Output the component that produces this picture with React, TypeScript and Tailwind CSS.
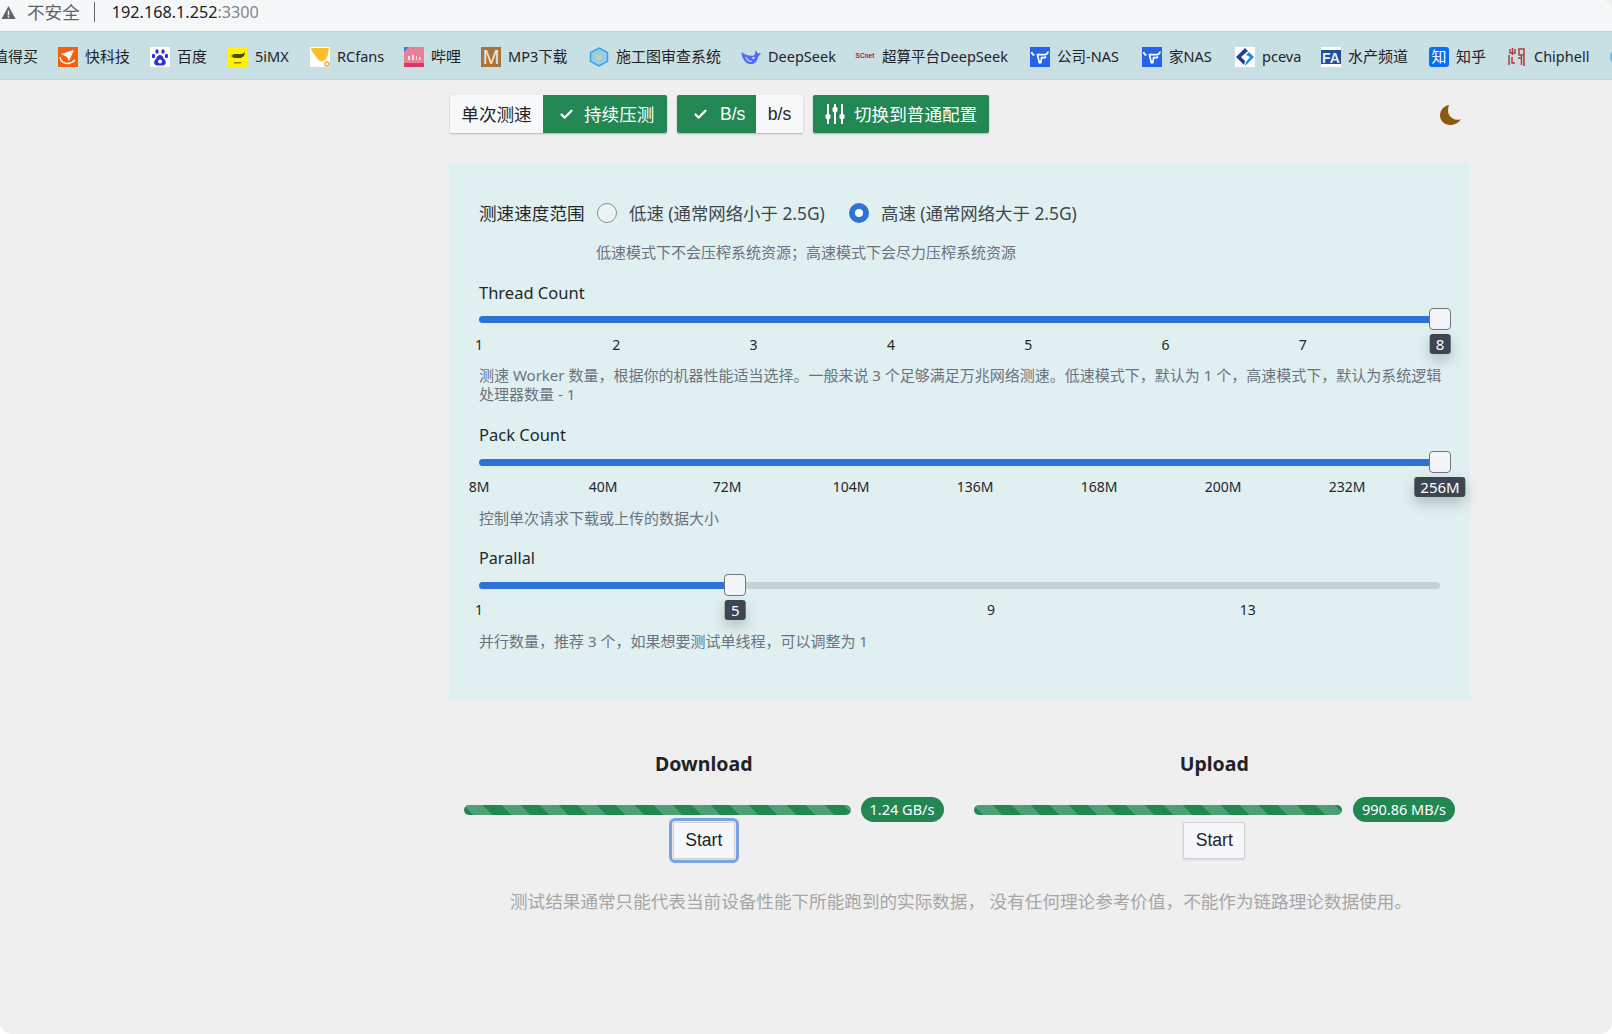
import { Check } from 'lucide-react';
import type { ReactNode } from 'react';

const sans = "font-['Noto_Sans','Noto_Sans_CJK_SC',sans-serif]";
const arial = "font-['Liberation_Sans','Noto_Sans_CJK_SC',sans-serif]";

const Bull = ({ fill = '#2563eb' }: { fill?: string }) => (
  <svg viewBox="0 0 20 20" className="size-5">
    <rect width="20" height="20" fill={fill} />
    <path d="M1.500 5c.5 2 1.500 3 3 3M18 4.500c0 2-1.500 3-3.500 3.200H7.500l1.800 8h1.500l.8-5h3.500l.5-1.500" fill="none" stroke="#fff" strokeWidth="1.700" />
  </svg>
);

const bookmarks: { name: string; w: string; icon: ReactNode }[] = [
  {
    name: '快科技',
    w: 'w-[92px]',
    icon: (
      <svg viewBox="0 0 20 20" className="size-5">
        <rect width="20" height="20" fill="#f4620f" />
        <path d="M3 7l13-4-5 11-2-4z" fill="#fff" />
        <path d="M2 10c1 7 9 9 15 3" fill="none" stroke="#fff" strokeWidth="1.500" />
      </svg>
    ),
  },
  {
    name: '百度',
    w: 'w-[78px]',
    icon: (
      <svg viewBox="0 0 20 20" className="size-5">
        <rect width="20" height="20" fill="#fff" />
        <g fill="#2932e1">
          <ellipse cx="7" cy="4.500" rx="1.700" ry="2.300" />
          <ellipse cx="13" cy="4.500" rx="1.700" ry="2.300" />
          <ellipse cx="3.500" cy="9" rx="1.700" ry="2.300" />
          <ellipse cx="16.500" cy="9" rx="1.700" ry="2.300" />
          <path d="M10 8c-3 0-3 3-5 5-2 3 0 5.500 2.500 5.500h5c2.500 0 4.500-2.500 2.500-5.500-2-2-2-5-5-5z" />
        </g>
        <circle cx="10" cy="14.500" r="2" fill="#fff" />
      </svg>
    ),
  },
  {
    name: '5iMX',
    w: 'w-[82px]',
    icon: (
      <svg viewBox="0 0 20 20" className="size-5">
        <rect width="20" height="20" fill="#fff200" />
        <path d="M3 9l3-2h8l3-2-1 4-3 2H6z" fill="#4d4a10" />
        <rect x="6" y="15" width="7" height="1.500" fill="#8a861a" />
      </svg>
    ),
  },
  {
    name: 'RCfans',
    w: 'w-[94px]',
    icon: (
      <svg viewBox="0 0 20 20" className="size-5">
        <rect width="20" height="20" fill="#fff" />
        <path d="M1 1h18l-1.500 8c-1 3-3 4-4.500 5-3 1-4-.5-6-3C5 8 2 6 1 1z" fill="#fdbf26" />
        <circle cx="17" cy="17" r="2" fill="none" stroke="#f5a742" strokeWidth="1.500" />
      </svg>
    ),
  },
  {
    name: '哔哩',
    w: 'w-[77px]',
    icon: (
      <svg viewBox="0 0 20 20" className="size-5">
        <rect width="20" height="20" fill="#e9809a" />
        <rect y="16" width="20" height="4" fill="#d83b66" />
        <path d="M0 0h5L0 5z" fill="#3a7bd5" />
        <path d="M4 13V9h2v4zm4 0V8h2v5zm4 0V9h1v4zm3 0v-3h1.500v3z" fill="#fbe4ea" />
      </svg>
    ),
  },
  {
    name: 'MP3下载',
    w: 'w-[108px]',
    icon: (
      <div className={`flex size-5 items-center justify-center bg-[#a9743c] text-[20px] leading-none text-[#f3e7d8] ${arial}`}>M</div>
    ),
  },
  {
    name: '施工图审查系统',
    w: 'w-[152px]',
    icon: (
      <svg viewBox="0 0 20 20" className="size-5">
        <path d="M10 1l8.500 4.700v8.600L10 19l-8.500-4.700V5.700z" fill="#8fd0ee" stroke="#3e9ddb" strokeWidth="1.500" />
        <rect x="7.500" y="8" width="5" height="5" fill="#e8c884" />
      </svg>
    ),
  },
  {
    name: 'DeepSeek',
    w: 'w-[114px]',
    icon: (
      <svg viewBox="0 0 20 20" className="size-5">
        <path d="M.5 5c.5 7 4.500 13 10.500 12 3.500-.5 5.500-3.500 6-7L20 6l-3 .5L14.500 3c.5 2-.5 4-1.500 5.500C9 9.500 4 8 .5 5z" fill="#4d6bfe" />
        <path d="M5 10c1 3 3 4.500 6 4.500" fill="none" stroke="#c8dfe3" strokeWidth="1.200" />
        <circle cx="12.500" cy="11" r="1.200" fill="#c8dfe3" />
      </svg>
    ),
  },
  {
    name: '超算平台DeepSeek',
    w: 'w-[175px]',
    icon: (
      <div className={`flex size-5 items-center justify-center text-[6.500px] leading-none font-bold whitespace-nowrap text-[#b3202c] ${arial}`}>SCnet</div>
    ),
  },
  { name: '公司-NAS', w: 'w-[112px]', icon: <Bull /> },
  { name: '家NAS', w: 'w-[93px]', icon: <Bull /> },
  {
    name: 'pceva',
    w: 'w-[86px]',
    icon: (
      <svg viewBox="0 0 20 20" className="size-5">
        <rect width="20" height="20" fill="#fff" />
        <path d="M10 1l3 3-7 6 4 4-1 4-8-8z" fill="#1d3f9a" />
        <path d="M14 5l5 5-9 9 1-4 4-5-4-2z" fill="#1d8fd8" />
      </svg>
    ),
  },
  {
    name: '水产频道',
    w: 'w-[108px]',
    icon: (
      <div className={`flex size-5 items-end justify-center bg-[linear-gradient(#fff_15%,#1f4e94_15%,#1f4e94_85%,#fff_85%)] pb-[2px] text-[14px] leading-none font-bold text-[#e8eef6] ${arial}`}>FA</div>
    ),
  },
  {
    name: '知乎',
    w: 'w-[78px]',
    icon: (
      <div className={`flex size-5 items-center justify-center rounded-[3px] bg-[#0b6cf5] text-[15px] leading-none text-white ${sans}`}>知</div>
    ),
  },
  {
    name: 'Chiphell',
    w: 'w-[103px]',
    icon: (
      <svg viewBox="0 0 20 20" className="size-5" fill="none" stroke="#b5393f" strokeWidth="1.500">
        <path d="M3 2v4h5V2M5.500 1v7M2 8v10M5 10v6h3M12 2h5v6h-5zM14.500 8v10M11 11h3M17 9v10" />
      </svg>
    ),
  },
];

type Marks = { labels: string[]; itemW: string };

function Slider({ percent, badge, marks, tickGap }: { percent: number; badge: string; marks: Marks; tickGap: string }) {
  return (
    <div className="w-[961px]">
      <div className="relative h-[22px] pt-2">
        <div className="h-[7px] overflow-hidden rounded-full bg-[#c5d2d5]">
          <div className="h-full bg-[#2e72d6]" style={{ width: `${percent}%` }} />
        </div>
        <div
          className="absolute top-0 -ml-[11px] size-[22px] rounded-[4px] border border-[#6f767e] bg-[#f3f5f8]"
          style={{ left: `${percent}%` }}
        />
        <div
          className="absolute top-[26px] flex h-5 -translate-x-1/2 items-center rounded-[3px] bg-[#3e4552] px-[6px] text-[15px] leading-none text-white shadow-[0_6px_14px_rgba(0,0,0,0.22)]"
          style={{ left: `${percent}%` }}
        >
          {badge}
        </div>
      </div>
      <div className={`${tickGap} flex h-5 items-center text-[14px] leading-5 text-[#23272b]`}>
        {marks.labels.map((label) => (
          <div key={label} className={`${marks.itemW} shrink-0`}>
            <span className="inline-block -translate-x-1/2">{label}</span>
          </div>
        ))}
      </div>
    </div>
  );
}

function Radio({ on }: { on?: boolean }) {
  if (on) {
    return (
      <span className="flex size-5 items-center justify-center rounded-full bg-[#2e72d6]">
        <span className="size-2 rounded-full bg-white" />
      </span>
    );
  }
  return <span className="size-5 rounded-full border-[1.5px] border-[#868e96] bg-[#eaf4f4]" />;
}

function Meter({ title, value, barW, badgeW, pad, focused }: { title: string; value: string; barW: string; badgeW: string; pad: string; focused?: boolean }) {
  return (
    <div className={`${pad} flex w-1/2 flex-col items-center`}>
      <div className="h-7 text-[19.500px] leading-7 font-bold text-[#1f2328]">{title}</div>
      <div className="mt-[19px] flex h-[25px] w-full items-center justify-between">
        <div className={`${barW} h-[10px] rounded-full bg-[#228753] bg-[linear-gradient(45deg,rgba(255,255,255,.2)_25%,transparent_25%,transparent_50%,rgba(255,255,255,.2)_50%,rgba(255,255,255,.2)_75%,transparent_75%,transparent)] bg-[length:38px_38px]`} />
        <div className={`${badgeW} flex h-[25px] items-center justify-center rounded-full bg-[#228753] text-[14.500px] text-white`}>{value}</div>
      </div>
      <button
        className={`h-[37px] w-[62px] rounded-[2px] border border-[#cfd0d2] bg-[#f6f7fa] text-[17.600px] text-[#1f2328] shadow-[0_1px_2px_rgba(0,0,0,0.1)] ${arial} ${focused ? 'outline-[3px] outline-offset-[1px] outline-[#7aa3e0]' : ''}`}
      >
        Start
      </button>
    </div>
  );
}

export default function App() {
  return (
    <div className={`h-[1034px] w-[1612px] overflow-hidden rounded-b-[12px] bg-[#efefef] ${sans}`}>
      <div className="flex h-[31px] items-start rounded-tr-[10px] bg-[#f5f8f9] text-[17.600px] leading-6 text-[#202124]">
        <svg viewBox="0 0 16 16" className="mt-[5px] ml-[1px] size-[15px]">
          <path d="M8 1l7.500 14H.5z" fill="#5f6368" />
          <rect x="7.200" y="6" width="1.600" height="5" fill="#f5f8f9" />
          <rect x="7.200" y="12" width="1.600" height="1.600" fill="#f5f8f9" />
        </svg>
        <span className="ml-[11px] text-[#5f6368]">不安全</span>
        <span className="mt-[2px] ml-[14px] h-5 w-px bg-[#5f6368]" />
        <span className="ml-[17px] text-[16.200px]">192.168.1.252<span className="text-[#80868b]">:3300</span></span>
      </div>

      <div className="flex h-[49px] items-center overflow-hidden border-y border-[#c9ced0] bg-[#c8dfe3] pt-[2px] text-[#1f2328]">
        <div className="-ml-[7px] w-[65px] shrink-0 text-[15px]">值得买</div>
        {bookmarks.map((b) => (
          <div key={b.name} className={`${b.w} flex shrink-0 items-center gap-[7px] ${/[a-z]/i.test(b.name) ? 'text-[14.500px]' : 'text-[15px]'}`}>
            {b.icon}
            <span className="whitespace-nowrap">{b.name}</span>
          </div>
        ))}
        <div className="size-5 shrink-0 rounded-full bg-[#6fb7e0]" />
      </div>

      <div className="ml-[449px] w-[1021px]">
        <div className="flex h-[83px] items-start pt-[15px] text-[17.600px]">
          <div className="ml-px flex h-[38px] rounded-[2px] shadow-[0_1px_2px_rgba(0,0,0,0.25)]">
            <div className="flex w-[93px] items-center justify-center rounded-l-[2px] bg-[#f7f8fa] text-[#23272b]">单次测速</div>
            <div className="flex w-[124px] items-center gap-[10px] rounded-r-[2px] bg-[#228753] pl-4 text-white">
              <Check size={15} strokeWidth={3.500} />
              持续压测
            </div>
          </div>
          <div className={`ml-[10px] flex h-[38px] rounded-[2px] shadow-[0_1px_2px_rgba(0,0,0,0.25)] ${arial}`}>
            <div className="flex w-[79px] items-center gap-[12px] rounded-l-[2px] bg-[#228753] pl-4 text-white">
              <Check size={15} strokeWidth={3.500} />
              B/s
            </div>
            <div className="flex w-[47px] items-center justify-center rounded-r-[2px] bg-[#f7f8fa] text-[#23272b]">b/s</div>
          </div>
          <div className="ml-[10px] flex h-[38px] w-[176px] items-center gap-[9px] rounded-[2px] bg-[#228753] pl-3 text-white shadow-[0_1px_2px_rgba(0,0,0,0.25)]">
            <svg viewBox="0 0 20 20" className="size-5" fill="#fff">
              <rect x="2" y="0" width="2" height="20" />
              <rect x="9" y="0" width="2" height="20" />
              <rect x="16" y="0" width="2" height="20" />
              <rect x="0.500" y="10" width="5" height="5" rx="1.500" />
              <rect x="7.500" y="3" width="5" height="5" rx="1.500" />
              <rect x="14.500" y="10" width="5" height="5" rx="1.500" />
            </svg>
            切换到普通配置
          </div>
          <svg viewBox="0 0 21 20" className="mt-[10px] ml-[451px] h-5 w-[21px]">
            <path d="M9 0C3 1 0 6 0 10.500 0 16 5 20 10 20c5 0 9-2.500 11-6-2 1-4 1-6 .5C10.500 13 8 9.500 8 6c0-2 .3-4 1-6z" fill="#8b5a0f" />
          </svg>
        </div>

        <div className="bg-[#e0f0f0] px-[30px] pt-[38px] pb-[49px]">
          <div className="flex h-6 items-center text-[17.400px] text-[#23272b]">
            <span className="w-[118px] text-[17.600px]">测速速度范围</span>
            <Radio />
            <span className="ml-3 w-[220px] text-[#3f464d]">低速 (通常网络小于 2.5G)</span>
            <Radio on />
            <span className="ml-3 text-[#3f464d]">高速 (通常网络大于 2.5G)</span>
          </div>
          <p className="mt-[18px] ml-[117px] text-[15px] leading-[19px] text-[#6b7280]">
            低速模式下不会压榨系统资源；高速模式下会尽力压榨系统资源
          </p>

          <div className="mt-[19px] h-6 text-[16.500px] leading-6 text-[#23272b]">Thread Count</div>
          <div className="mt-[3px]">
            <Slider percent={100} badge="8" tickGap="mt-[5px]" marks={{ labels: ['1', '2', '3', '4', '5', '6', '7'], itemW: 'w-[137.300px]' }} />
          </div>
          <p className="mt-[11px] w-[966px] text-[15px] leading-[19px] text-[#6b7280]">
            测速 Worker 数量，根据你的机器性能适当选择。一般来说 3 个足够满足万兆网络测速。低速模式下，默认为 1 个，高速模式下，默认为系统逻辑处理器数量 - 1
          </p>

          <div className="mt-[19px] h-6 text-[16.500px] leading-6 text-[#23272b]">Pack Count</div>
          <div className="mt-1">
            <Slider percent={100} badge="256M" tickGap="mt-1" marks={{ labels: ['8M', '40M', '72M', '104M', '136M', '168M', '200M', '232M'], itemW: 'w-[124px]' }} />
          </div>
          <p className="mt-3 text-[15px] leading-[19px] text-[#6b7280]">控制单次请求下载或上传的数据大小</p>

          <div className="mt-[18px] h-6 text-[16.200px] leading-6 text-[#23272b]">Parallal</div>
          <div className="mt-1">
            <Slider percent={26.67} badge="5" tickGap="mt-1" marks={{ labels: ['1', '9', '13'], itemW: 'w-[512px] [&:nth-child(n+2)]:w-[256.700px]' }} />
          </div>
          <p className="mt-3 text-[15px] leading-[19px] text-[#6b7280]">并行数量，推荐 3 个，如果想要测试单线程，可以调整为 1</p>
        </div>

        <div className="mt-[50px] flex">
          <Meter title="Download" value="1.24 GB/s" barW="w-[387px]" badgeW="w-[83px]" pad="pr-4 pl-[15px]" focused />
          <Meter title="Upload" value="990.86 MB/s" barW="w-[368px]" badgeW="w-[102px]" pad="pr-[15px] pl-[14px]" />
        </div>
        <p className="mt-[29px] pl-[61px] text-[17.600px] leading-[26px] whitespace-nowrap text-[#a6a6a6]">
          测试结果通常只能代表当前设备性能下所能跑到的实际数据， 没有任何理论参考价值，不能作为链路理论数据使用。
        </p>
      </div>
    </div>
  );
}
